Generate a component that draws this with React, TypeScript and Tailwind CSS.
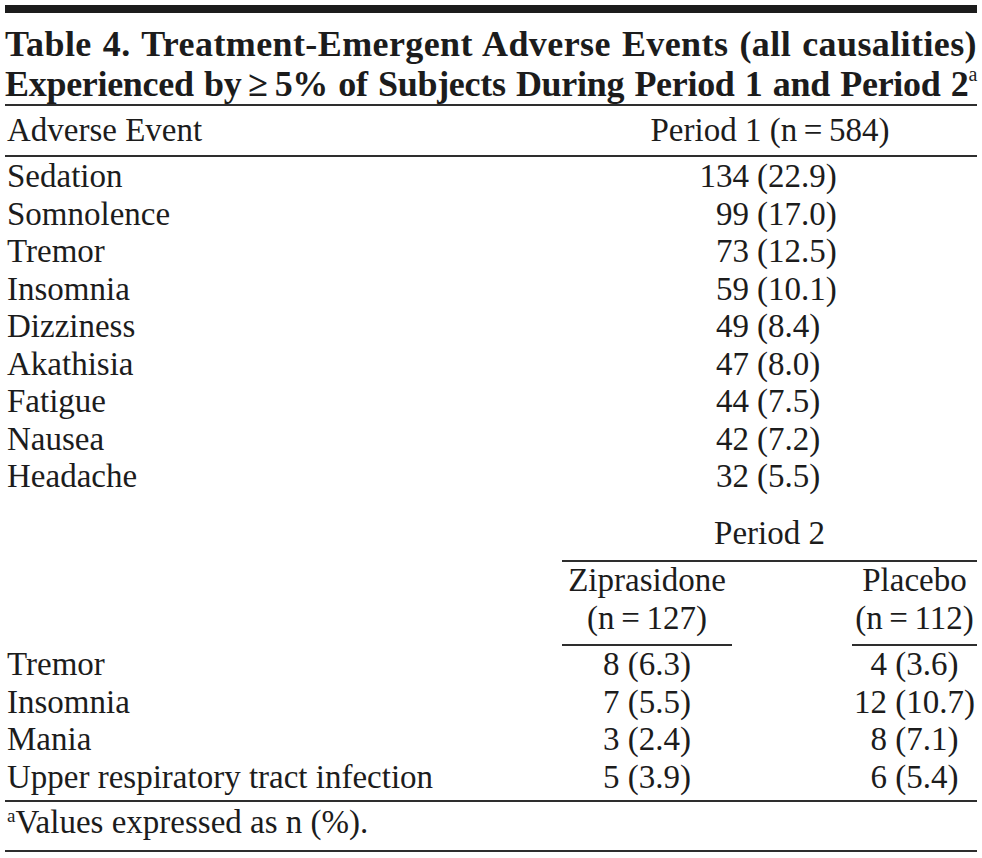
const serif = "font-['Liberation_Serif',_'Times_New_Roman',_serif]";

const period1 = [
  ["Sedation", "134", "(22.9)"],
  ["Somnolence", "99", "(17.0)"],
  ["Tremor", "73", "(12.5)"],
  ["Insomnia", "59", "(10.1)"],
  ["Dizziness", "49", "(8.4)"],
  ["Akathisia", "47", "(8.0)"],
  ["Fatigue", "44", "(7.5)"],
  ["Nausea", "42", "(7.2)"],
  ["Headache", "32", "(5.5)"],
];

const period2 = [
  ["Tremor", "8 (6.3)", "4 (3.6)"],
  ["Insomnia", "7 (5.5)", "12 (10.7)"],
  ["Mania", "3 (2.4)", "8 (7.1)"],
  ["Upper respiratory tract infection", "5 (3.9)", "6 (5.4)"],
];

function Rule({ className = "" }: { className?: string }) {
  return <div className={`h-[2px] bg-[#2e2e2e] ${className}`} />;
}

export default function App() {
  return (
    <div className={`${serif} w-[982px] h-[858px] bg-white text-[#1c1c1c] overflow-hidden`}>
      <div className="px-[5px] pt-[5px]">
        <div className="h-[8px] bg-[#1c1c1c]" />

        <div className="mt-[11px] text-[36px] leading-[40px] font-bold">
          <div className="tracking-[0.4px] text-justify [text-align-last:justify]">
            Table 4. Treatment-Emergent Adverse Events (all causalities)
          </div>
          <div className="whitespace-nowrap tracking-[-0.3px] text-justify [text-align-last:justify]">
            Experienced by{"\u2009≥\u2009"}5% of Subjects During Period 1 and Period 2<sup className="text-[20px] font-normal relative -top-[15px]">a</sup>
          </div>
        </div>

        <Rule />

        <div className="text-[33px] leading-[37.5px]">
          <div className="mt-[6px] mb-[5.5px] flex pl-[2px]">
            <span className="flex-1">Adverse Event</span>
            <span className="w-[260px] text-center">Period 1 (n{"\u2009=\u2009"}584)</span>
            <span className="w-[77px]" />
          </div>
          <Rule />

          <div className="mt-[1px]">
            {period1.map(([label, n, pct]) => (
              <div key={label} className="flex">
                <span className="w-[693px] pl-[2px]">{label}</span>
                <span className="w-[51px] text-right">{n}</span>
                <span className="pl-[8px]">{pct}</span>
              </div>
            ))}
          </div>

          <div className="mt-[19.5px] grid grid-cols-[557px_170px_120px_125px]">
            <div className="col-start-2 col-span-3 text-center">Period 2</div>
            <Rule className="col-start-2 col-span-3 mt-[7.5px]" />
            <div className="col-start-2 text-center">
              <div>Ziprasidone</div>
              <div>(n{"\u2009=\u2009"}127)</div>
            </div>
            <div className="col-start-4 text-center">
              <div>Placebo</div>
              <div>(n{"\u2009=\u2009"}112)</div>
            </div>
            <Rule className="col-start-2 mt-[7px]" />
            <Rule className="col-start-4 mt-[7px]" />

            {period2.map(([label, zip, pla]) => (
              <div key={label} className="contents">
                <div className="col-start-1 pl-[2px] whitespace-nowrap">{label}</div>
                <div className="col-start-2 text-center">{zip}</div>
                <div className="col-start-4 text-center">{pla}</div>
              </div>
            ))}
          </div>

          <Rule className="mt-[4px]" />
          <div className="mt-[2px] pl-[2px]">
            <sup className="text-[19px] relative -top-[11px]">a</sup>Values expressed as n (%).
          </div>
          <Rule className="mt-[8px]" />
        </div>
      </div>
    </div>
  );
}
